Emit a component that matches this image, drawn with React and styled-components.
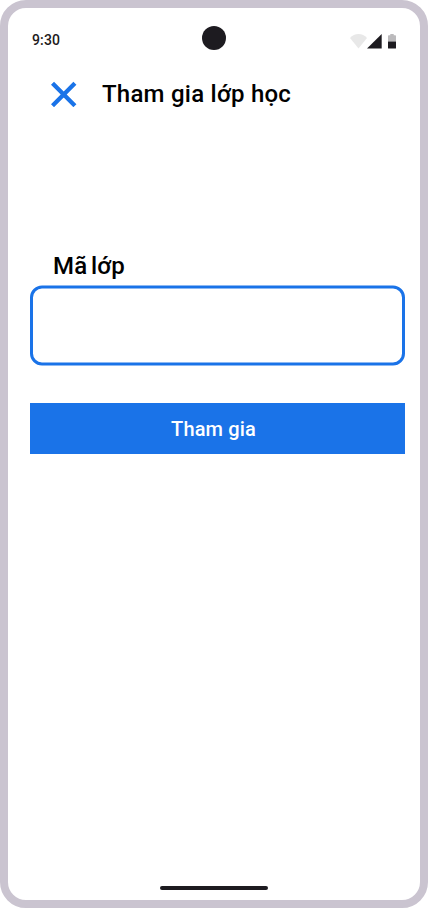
import React from "react";
import styled, { createGlobalStyle } from "styled-components";

const Global = createGlobalStyle`
  * { box-sizing: border-box; }
  body {
    margin: 0;
    background: #fff;
    font-family: Roboto, sans-serif;
  }
`;
const Phone = styled.main`
  width: 428px;
  height: 908px;
  border: 8px solid #cac4d0;
  border-radius: 26px;
  background: #fff;
  display: flex;
  flex-direction: column;
  overflow: hidden;
`;
const StatusBar = styled.div`
  height: 52px;
  padding: 0 24px 10px;
  display: grid;
  grid-template-columns: 1fr 24px 1fr;
  align-items: end;
`;
const Time = styled.span`
  font-size: 14px;
  font-weight: 500;
  line-height: 20px;
  letter-spacing: 0.14px;
  color: #1d1b20;
`;
const Camera = styled.span`
  width: 24px;
  height: 24px;
  border-radius: 50%;
  background: #1d1b20;
`;
const StatusIcons = styled.svg`
  justify-self: end;
  width: 46px;
  height: 17px;
`;
const Header = styled.header`
  display: flex;
  align-items: center;
  height: 52px;
  margin-top: 8px;
  padding-left: 43px;
  gap: 25px;
`;
const CloseButton = styled.button`
  width: 26px;
  height: 26px;
  padding: 0;
  border: 0;
  background: none;
  svg { display: block; }
`;
const Title = styled.h1`
  margin: 0;
  font-size: 24px;
  font-weight: 500;
  line-height: 32px;
  letter-spacing: 0.24px;
`;
const Form = styled.form`
  display: flex;
  flex-direction: column;
  margin: 130px 15px 0 22px;
`;
const Label = styled.label`
  padding-left: 23px;
  font-size: 24px;
  font-weight: 500;
  line-height: 32px;
  letter-spacing: 0.2px;
  word-spacing: -2.5px;
`;
const Input = styled.input`
  height: 80px;
  margin-top: 3px;
  padding: 0 20px;
  border: 3px solid #1a73e8;
  border-radius: 12px;
  outline: none;
  font: 24px Roboto, sans-serif;
  transform: translateY(0.5px);
`;
const Submit = styled.button`
  height: 51px;
  margin-top: 38px;
  padding: 0 8px 0 0;
  border: 0;
  background: #1a73e8;
  color: #fff;
  font: 500 20px/24px Roboto, sans-serif;
  letter-spacing: 0.15px;
`;
const HomeIndicator = styled.div`
  width: 108px;
  height: 4px;
  margin: auto auto 10px;
  border-radius: 12px;
  background: #1d1b20;
`;

export default function App() {
  return (
    <>
      <Global />
      <Phone>
        <StatusBar>
          <Time>9:30</Time>
          <Camera />
          <StatusIcons viewBox="0 0 46 17" fill="#1d1b20">
            <path opacity=".1" d="M8.5 15.5 0 4.9C2.3 2.5 5.2 1 8.5 1S14.7 2.5 17 4.9Z" />
            <path d="M17 15.5H31.7V1Z" />
            <path opacity=".3" d="M38 8.5V3Q38 2.3 38.7 2.3H40.3V1H43.7V2.3H45.3Q46 2.3 46 3V8.5Z" />
            <path d="M38 8.5H46V15Q46 15.5 45.5 15.5H38.5Q38 15.5 38 15Z" />
          </StatusIcons>
        </StatusBar>
        <Header>
          <CloseButton type="button" aria-label="Đóng">
            <svg width="26" height="26" viewBox="0 0 26 26">
              <path d="M1.5 2.3 23.9 24.7M23.9 2.3 1.5 24.7" stroke="#1a73e8" strokeWidth="4.3" />
            </svg>
          </CloseButton>
          <Title>Tham gia lớp học</Title>
        </Header>
        <Form>
          <Label htmlFor="code">Mã lớp</Label>
          <Input id="code" />
          <Submit type="button">Tham gia</Submit>
        </Form>
        <HomeIndicator />
      </Phone>
    </>
  );
}
